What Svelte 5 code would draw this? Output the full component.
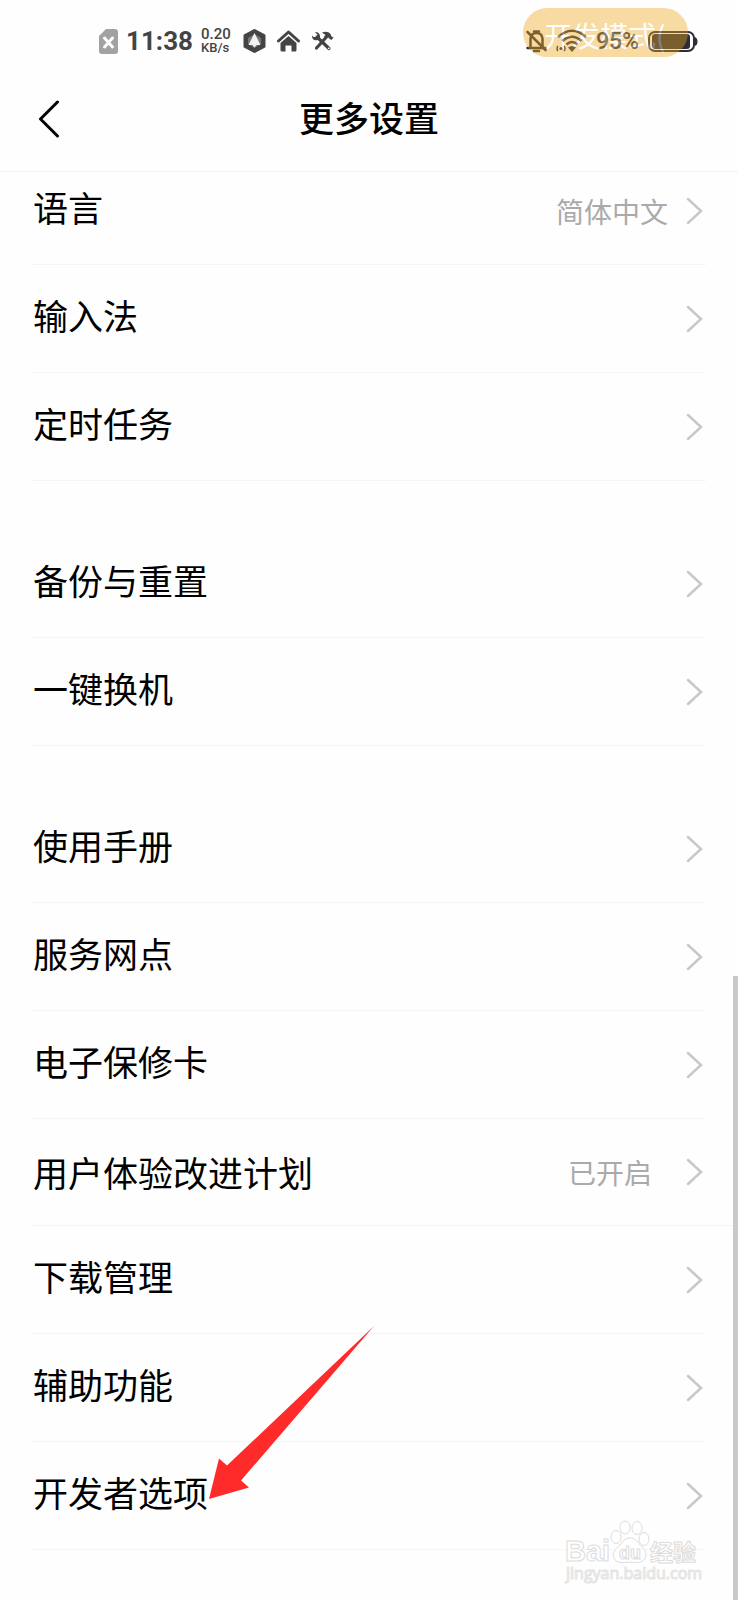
<script>
  const groups = [
    [
      { label: '语言', value: '简体中文' },
      { label: '输入法' },
      { label: '定时任务' }
    ],
    [{ label: '备份与重置' }, { label: '一键换机' }],
    [
      { label: '使用手册' },
      { label: '服务网点' },
      { label: '电子保修卡' },
      { label: '用户体验改进计划', value: '已开启', wide: true },
      { label: '下载管理' },
      { label: '辅助功能' },
      { label: '开发者选项', marked: true }
    ]
  ];
</script>

<div class="page">
  <div class="top">
    <div class="status">
      <div class="left">
        <svg width="19" height="25" viewBox="0 0 19 25" aria-hidden="true">
          <path d="M7 0H16Q19 0 19 3V22Q19 25 16 25H3Q0 25 0 22V7Z" fill="#a2a2a2" />
          <path d="M5.500 9L13.500 18M13.500 9L5.500 18" stroke="#fff" stroke-width="3" stroke-linecap="round" />
        </svg>
        <span class="time">11:38</span>
        <span class="speed"><span>0.20</span><span class="unit">KB/s</span></span>
        <svg class="hex" width="23" height="24" viewBox="0 0 23 24" aria-hidden="true">
          <path d="M11.500 1.500L21 6.500V17.500L11.500 22.500L2 17.500V6.500Z" fill="#444" stroke="#444" stroke-width="3" stroke-linejoin="round" />
          <path d="M5 9L11.500 5L18 9V15L11.500 19L5 15Z" fill="#777" />
          <path d="M11.500 4L14.500 10L17.500 16H13.500L11.500 18.500L9.500 16H5.500L8.500 10Z" fill="#f2f2f2" />
        </svg>
        <svg width="23" height="22" viewBox="0 0 23 22" aria-hidden="true">
          <path d="M1.500 11L11.500 2L21.500 11" fill="none" stroke="#444" stroke-width="3" stroke-linecap="round" stroke-linejoin="round" />
          <path d="M3.500 13L11.500 6L19.500 13V20Q19.500 21.500 18 21.500H14.500V15.500H8.500V21.500H5Q3.500 21.500 3.500 20Z" fill="#444" />
        </svg>
        <svg width="23" height="20" viewBox="0 0 23 20" aria-hidden="true">
          <path d="M6 6L18 17.500" stroke="#444" stroke-width="3.200" stroke-linecap="round" />
          <path d="M15.500 6L5.500 17" stroke="#444" stroke-width="3.200" stroke-linecap="round" />
          <path d="M4 1.500L6.500 3.500L5.500 6L2.500 6L1.200 4.500C0.500 8 3.500 10 6.500 9L9 7C9.500 3.500 7.500 0.500 4 1.500Z" fill="#444" />
          <path d="M11 1.500C14.500 0 17.500 0.500 19.500 3L20.500 5.500L22.500 6.500L20.500 9L18 7.500L17 6L15 7.500L13 5.500L14.500 4Z" fill="#444" />
          <circle cx="17.800" cy="17.300" r="0.900" fill="#fff" />
        </svg>
      </div>
      <div class="right">
        <svg width="21" height="23" viewBox="0 0 21 23" aria-hidden="true">
          <path d="M4.500 17.500V8.500Q5 3 10.500 3Q16 3 16.500 8.500V17.500M1.500 18H19.500" fill="none" stroke="#333" stroke-width="2.500" stroke-linecap="round" />
          <path d="M8 1.500H13M8 21H13" stroke="#333" stroke-width="2.500" stroke-linecap="round" />
          <path d="M1.500 2L19.500 20" stroke="#333" stroke-width="2.500" stroke-linecap="round" />
        </svg>
        <svg class="wifi" width="31" height="24" viewBox="0 0 31 24" fill="none" stroke="#333" aria-hidden="true">
          <path d="M2 8Q16 -4.500 30 8" stroke-width="2.600" />
          <path d="M6.500 12Q16 3.500 25.500 12" stroke-width="2.600" />
          <path d="M10.500 15.500Q16 10.500 21.500 15.500" stroke-width="2.600" />
          <path d="M12 18.500Q16 15.500 20 18.500L16 23Z" fill="#333" stroke="none" />
          <path d="M2 17Q0 19.500 2 22M8 17Q10 19.500 8 22" stroke-width="1.500" />
          <circle cx="5" cy="19.500" r="1.600" fill="#333" stroke="none" />
        </svg>
        <span class="percent">95%</span>
        <svg width="50" height="21" viewBox="0 0 50 21" aria-hidden="true">
          <rect x="1" y="1" width="45" height="19" rx="6" fill="#fff" stroke="#2b2d38" stroke-width="2" />
          <rect x="4" y="3" width="38" height="15" rx="3" fill="#2b2d38" />
          <path d="M47 6Q49.500 7 49.500 10.500Q49.500 14 47 15Z" fill="#2b2d38" />
        </svg>
        <div class="pill">开发模式(</div>
      </div>
    </div>
    <header>
      <button class="back" aria-label="返回">
        <svg width="22" height="38" viewBox="0 0 22 38" aria-hidden="true">
          <path d="M19.500 2L2.500 19L19.500 36" fill="none" stroke="#000" stroke-width="3" stroke-linecap="round" stroke-linejoin="round" />
        </svg>
      </button>
      <h1>更多设置</h1>
    </header>
  </div>

  <main>
    {#each groups as group}
      <ul>
        {#each group as item}
          <li class:wide={item.wide}>
            <button class="row">
              <span class="label">{item.label}</span>
              {#if item.value}<span class="value">{item.value}</span>{/if}
              <svg width="18" height="28" viewBox="0 0 18 28" aria-hidden="true">
                <path d="M2 2L15 14L2 26" fill="none" stroke="#c8c8c8" stroke-width="2.500" stroke-linecap="round" />
              </svg>
            </button>
            {#if item.marked}
              <svg class="arrow" width="166" height="174" viewBox="0 0 166 174" aria-hidden="true">
                <path d="M0 173L10 132.500L18 139.500L165 0L32 154.500L40 161.500Z" fill="#ff2a2a" />
              </svg>
            {/if}
          </li>
        {/each}
      </ul>
    {/each}
  </main>

  <div class="scrollbar"></div>

  <svg class="mark" width="142" height="64" viewBox="0 0 142 64" aria-hidden="true">
    <g fill="#fff" stroke="#dcdcdc" stroke-width="1">
      <text class="latin" x="1" y="41" font-size="29">Bai</text>
      <ellipse cx="52" cy="17" rx="5" ry="6.500" />
      <ellipse cx="61" cy="7.500" rx="5" ry="6.500" />
      <ellipse cx="73" cy="8" rx="5" ry="6.500" />
      <ellipse cx="80" cy="19" rx="5" ry="6.500" />
      <path d="M66 18C72 18 74 23 78 27C82 31 83 34 81 38C79 43 74 43 66 42C58 43 52 43 50 38C48 34 50 31 54 27C58 23 60 18 66 18Z" />
      <text class="latin" x="55" y="39" font-size="18">du</text>
      <text class="cjk" x="86" y="41" font-size="23">经验</text>
    </g>
    <text class="url" x="2" y="59" font-size="16" fill="#f4f4f4" stroke="#e4e4e4" stroke-width="1">jingyan.baidu.com</text>
  </svg>
</div>

<style>
  :global(body) {
    background: #fefefe;
  }
  .page {
    position: relative;
    min-height: 100vh;
    overflow: hidden;
    background: #fefefe;
    color: #000;
    font-family: "Noto Sans CJK SC", sans-serif;
  }
  button {
    border: 0;
    background: none;
    padding: 0;
    color: inherit;
    font-family: inherit;
  }
  svg {
    display: block;
    flex: none;
  }
  .top {
    position: relative;
    z-index: 1;
    background: #fefefe;
    border-bottom: 1px solid #f4f4f4;
  }
  .status {
    display: flex;
    justify-content: space-between;
    height: 82px;
    padding: 0 40px 0 99px;
    color: #444;
    font-family: Roboto, "Noto Sans CJK SC", sans-serif;
  }
  .left,
  .right {
    display: flex;
    align-items: center;
  }
  .left {
    gap: 11px;
  }
  .right {
    position: relative;
    gap: 9px;
    color: #333;
  }
  .time {
    margin-right: -3px;
    margin-left: -3px;
    font-size: 26px;
    font-weight: 700;
  }
  .speed {
    display: flex;
    flex-direction: column;
    margin-right: 1px;
    font-size: 15px;
    font-weight: 500;
    line-height: 13px;
  }
  .unit {
    font-size: 13px;
  }
  .percent {
    font-size: 23px;
    font-weight: 500;
  }
  .pill {
    position: absolute;
    top: 8px;
    right: 10px;
    box-sizing: border-box;
    width: 165px;
    height: 49px;
    padding-left: 21px;
    border-radius: 25px;
    background: #f0a51e;
    color: #fff;
    font-family: "Noto Sans CJK SC", sans-serif;
    font-size: 28px;
    line-height: 55px;
    white-space: nowrap;
    opacity: 0.4;
  }
  header {
    display: grid;
    grid-template-columns: 60px 1fr 60px;
    height: 89px;
  }
  .back {
    display: flex;
    justify-content: flex-end;
    align-self: start;
    padding-top: 18px;
  }
  h1 {
    align-self: start;
    margin: 0;
    font-size: 35px;
    font-weight: 500;
    line-height: 70px;
    text-align: center;
  }
  main {
    margin-top: -15px;
  }
  ul {
    margin: 0 0 49px;
    padding: 0 32px;
    list-style: none;
  }
  ul:last-child {
    margin-bottom: 0;
  }
  li {
    position: relative;
    border-bottom: 1px solid #f5f5f5;
  }
  .row {
    display: flex;
    align-items: center;
    width: 100%;
    height: 107px;
    padding: 0 2px 0 1px;
    text-align: left;
  }
  .wide {
    margin-right: -32px;
  }
  .wide .row {
    height: 106px;
    padding-right: 34px;
  }
  .label {
    flex: 1;
    padding-bottom: 8px;
    font-size: 35px;
    line-height: 50px;
  }
  .wide .label {
    padding-bottom: 0;
  }
  .value {
    margin-right: 18px;
    color: #aaa;
    font-size: 28px;
    line-height: 40px;
  }
  .wide .value {
    margin-right: 34px;
  }
  .arrow {
    position: absolute;
    bottom: 49px;
    left: 177px;
    z-index: 1;
  }
  .scrollbar {
    position: absolute;
    top: 61%;
    right: 0;
    bottom: 0;
    width: 5px;
    background: #c9c9c9;
  }
  .mark {
    position: absolute;
    right: 32px;
    bottom: 16px;
  }
  .latin {
    font-family: "Liberation Sans", sans-serif;
    font-weight: 700;
  }
  .cjk {
    font-family: "Noto Sans CJK SC", sans-serif;
    font-weight: 700;
  }
  .url {
    font-family: "Open Sans", sans-serif;
  }
</style>
